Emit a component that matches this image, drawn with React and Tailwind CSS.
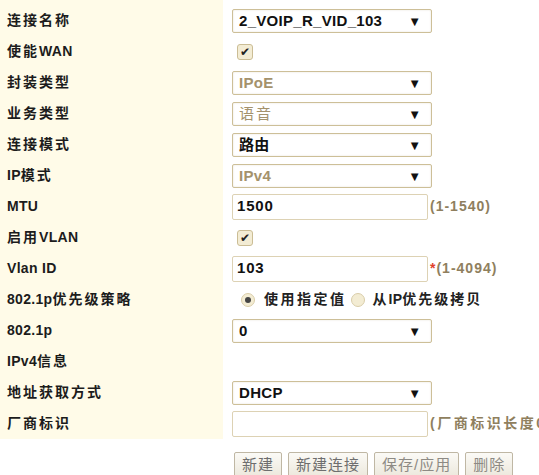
import React from "react";

const Arrow = () => (
  <span className="absolute right-[10px] top-1/2 -translate-y-1/2 text-[13px] leading-none text-[#111]">▼</span>
);

function Spaced({ text, cjk = "tracking-[2px]", latin = "tracking-[0.3px]" }) {
  const parts = text.match(/[\u4e00-\u9fff（）]+|[^\u4e00-\u9fff（）]+/g) || [];
  return (
    <>
      {parts.map((p, i) => (
        <span key={i} className={/[\u4e00-\u9fff]/.test(p) ? cjk : latin}>
          {p}
        </span>
      ))}
    </>
  );
}

function Sel({ value, disabled, serif }) {
  return (
    <div className="relative h-[24px] w-[200px] rounded-[2px] border border-[#cdbf98] bg-white shadow-[inset_0_0_2px_rgba(160,140,90,0.25)] flex items-center pl-[6px]">
      <span
        className={
          (disabled ? "text-[#a4926c] " : "text-[#111] ") +
          (serif ? "font-normal tracking-[2px] " : "font-bold tracking-[0.3px] ") +
          "text-[15px] leading-none"
        }
      >
        {value}
      </span>
      <Arrow />
    </div>
  );
}

function Inp({ value }) {
  return (
    <div className="h-[26px] w-[196px] rounded-[2px] border border-[#ddd2b4] bg-white flex items-center pl-[4px] text-[15px] font-bold tracking-[0.8px] text-[#111]">
      {value}
    </div>
  );
}

function Check() {
  return (
    <div className="ml-[5px] h-[16px] w-[16px] rounded-[3px] border border-[#cbbd95] bg-[#f3ecd4] flex items-center justify-center text-[12px] leading-none text-[#222]">
      ✔
    </div>
  );
}

function Radio({ on }) {
  return (
    <div className="h-[14px] w-[14px] rounded-full border border-[#d9cda9] bg-[#f3ecd3] flex items-center justify-center">
      {on && <div className="h-[6px] w-[6px] rounded-full bg-[#444]" />}
    </div>
  );
}

const rows = [
  ["连接名称", <Sel value="2_VOIP_R_VID_103" />],
  ["使能WAN", <Check />],
  ["封装类型", <Sel value="IPoE" disabled />],
  ["业务类型", <Sel value="语音" disabled serif />],
  ["连接模式", <Sel value="路由" />],
  ["IP模式", <Sel value="IPv4" disabled />],
  [
    "MTU",
    <div className="flex items-center">
      <Inp value="1500" />
      <span className="ml-[2px] text-[14px] font-bold tracking-[1px] text-[#8f7f5e]">(1-1540)</span>
    </div>,
  ],
  ["启用VLAN", <Check />],
  [
    "Vlan ID",
    <div className="flex items-center">
      <Inp value="103" />
      <span className="ml-[2px] text-[14px] font-bold tracking-[1px] text-[#8f7f5e]">
        <span className="text-[#e0402a]">*</span>(1-4094)
      </span>
    </div>,
  ],
  [
    "802.1p优先级策略",
    <div className="flex items-center pl-[9px] text-[14px] font-bold text-[#222]">
      <Radio on />
      <span className="ml-[9px] tracking-[2.5px]">使用指定值</span>
      <span className="ml-[4px]"><Radio /></span>
      <span className="ml-[8px]"><Spaced text="从IP优先级拷贝" cjk="tracking-[2px]" /></span>
    </div>,
  ],
  ["802.1p", <Sel value="0" />],
  ["IPv4信息", null],
  ["地址获取方式", <Sel value="DHCP" />],
  [
    "厂商标识",
    <div className="flex items-center">
      <Inp value="" />
      <span className="ml-[2px] whitespace-nowrap text-[14px] font-bold tracking-[2.5px] text-[#8f7f5e]">(厂商标识长度0</span>
    </div>,
  ],
];

const Btn = ({ children, faded }) => (
  <div
    className={
      "h-[26px] rounded-[2px] border border-[#bfb7a4] bg-gradient-to-b from-[#fbfaf6] to-[#ece8dc] px-[7px] flex items-center text-[15px] tracking-[1px] " +
      (faded ? "text-[#8d8a84]" : "text-[#6e6e6e]")
    }
  >
    {children}
  </div>
);

export default function App() {
  return (
    <div
      className="h-[475px] w-[539px] overflow-hidden bg-white"
      style={{ fontFamily: '"Liberation Sans", Arial, "Noto Sans CJK SC", sans-serif' }}
    >
      <div className="flex flex-col">
        {rows.map(([label, ctrl], i) => (
          <div key={i} className={"flex " + (i === 0 ? "h-[36px] pt-[5px]" : "h-[31px]") + " bg-white"}>
            <div className={"w-[223px] shrink-0 bg-[#fffbe8] flex items-center pl-[7px] text-[14px] font-bold text-[#1c1c1c] " + (i === 0 ? "-mt-[5px] pt-[5px]" : "")}>
              <Spaced text={label} />
            </div>
            <div className="flex items-center pl-[9px]">{ctrl}</div>
          </div>
        ))}
      </div>
      <div className="mt-[13px] flex gap-[6px] pl-[234px]">
        <Btn>新建</Btn>
        <Btn>新建连接</Btn>
        <Btn faded>保存/应用</Btn>
        <Btn faded>删除</Btn>
      </div>
    </div>
  );
}
